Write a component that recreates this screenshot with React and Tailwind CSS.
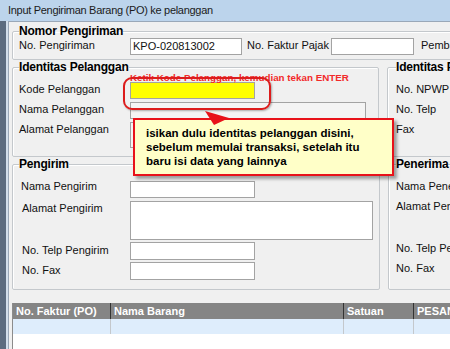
const Field = ({w, h = 17, bg = "bg-white", children}) => (
    <div className={`${w} shrink-0 border border-[#a3a3a3] ${bg} flex items-center pl-[2px]`} style={{height: h}}>
        {children}
    </div>
);

const Label = ({w = "w-[111px]", className = "", children}) => (
    <div className={`${w} shrink-0 h-[17px] flex items-center pb-[2px] whitespace-nowrap ${className}`}>{children}</div>
);

const Group = ({title, className = "", children}) => (
    <fieldset className={`border border-[#c4c8cc] rounded-[2px] shadow-[inset_1px_1px_0_#fff] px-[6px] ${className}`}>
        <legend className="text-[12px] leading-[12px] font-bold text-black tracking-[-0.2px]">{title}</legend>
        {children}
    </fieldset>
);

const App = () => {
    return (
        <div className="relative w-[450px] h-[349px] overflow-hidden bg-[#f0f0f0] font-['Liberation_Sans',Arial,sans-serif] text-[11px] text-[#111]">
            {/* title bar */}
            <div className="h-[21px] bg-[#bcd4ec] flex items-center pl-[8px] text-[11px] tracking-[-0.3px] text-[#1b1b1b] whitespace-nowrap">
                Input Pengiriman Barang (PO) ke pelanggan
            </div>
            <div className="flex h-[328px]">
                <div className="w-[6px] shrink-0 bg-[#5c6c80]"/>
                <div className="w-[2px] shrink-0 bg-[#d3dfec]"/>
                <div className="w-[640px] shrink-0 border-t border-l border-[#9aa8b8] pl-[3px] pt-[3px] flex flex-col">
                    {/* Nomor Pengiriman */}
                    <Group title="Nomor Pengiriman" className="w-[620px] pb-[4px]">
                        <div className="mt-[1px] flex items-center h-[17px]">
                            <Label>No. Pengiriman</Label>
                            <Field w="w-[112px]">KPO-020813002</Field>
                            <Label w="w-[84px]" className="ml-[5px]">No. Faktur Pajak</Label>
                            <Field w="w-[83px]"/>
                            <Label w="w-[80px]" className="ml-[7px]">Pembayaran</Label>
                        </div>
                    </Group>

                    {/* Identitas */}
                    <div className="mt-[1px] flex gap-[8px]">
                        <Group title="Identitas Pelanggan" className="w-[367px] pb-[8px]">
                            <div className="mt-[9px] flex flex-col gap-[3px]">
                                <div className="flex items-start">
                                    <Label>Kode Pelanggan</Label>
                                    <Field w="w-[125px]" bg="bg-[#ffff00]"/>
                                </div>
                                <div className="flex items-start">
                                    <Label>Nama Pelanggan</Label>
                                    <Field w="w-[236px]" bg="bg-[#f4f4f4]"/>
                                </div>
                                <div className="flex items-start">
                                    <Label>Alamat Pelanggan</Label>
                                    <Field w="w-[236px]" h={26} bg="bg-[#f4f4f4]"/>
                                </div>
                            </div>
                        </Group>
                        <Group title="Identitas Pelanggan" className="w-[240px] pb-[8px] px-[8px]">
                            <div className="mt-[9px] flex flex-col gap-[3px]">
                                <Label>No. NPWP</Label>
                                <Label>No. Telp</Label>
                                <div className="h-[26px]"><Label>Fax</Label></div>
                            </div>
                        </Group>
                    </div>

                    {/* Pengirim / Penerima */}
                    <div className="mt-[1px] flex gap-[8px]">
                        <Group title="Pengirim" className="w-[367px] pb-[9px]">
                            <div className="mt-[11px] flex flex-col">
                                <div className="flex items-start">
                                    <Label className="pl-[2px] -mt-[2px]">Nama Pengirim</Label>
                                    <Field w="w-[125px]"/>
                                </div>
                                <div className="mt-[3px] flex items-start">
                                    <Label className="pl-[3px]">Alamat Pengirim</Label>
                                    <Field w="w-[243px]" h={39}/>
                                </div>
                                <div className="mt-[2px] flex items-center">
                                    <Label className="pl-[3px]">No. Telp Pengirim</Label>
                                    <Field w="w-[125px]" h={18}/>
                                </div>
                                <div className="mt-[2px] flex items-center">
                                    <Label className="pl-[3px]">No. Fax</Label>
                                    <Field w="w-[125px]" h={18}/>
                                </div>
                            </div>
                        </Group>
                        <Group title="Penerima" className="w-[240px] pb-[9px] px-[7px]">
                            <div className="mt-[11px] flex flex-col">
                                <Label className="-mt-[2px]">Nama Penerima</Label>
                                <div className="mt-[3px] h-[39px]"><Label>Alamat Penerima</Label></div>
                                <div className="mt-[2px] h-[18px] flex items-center"><Label>No. Telp Penerima</Label></div>
                                <div className="mt-[2px] h-[18px] flex items-center"><Label>No. Fax</Label></div>
                            </div>
                        </Group>
                    </div>

                    {/* table */}
                    <div className="mt-[13px] flex-1 w-[620px] border-l border-[#8c8c8c] bg-white">
                        <div className="flex h-[16px] bg-[#858585] text-white font-bold">
                            <div className="w-[98px] shrink-0 border-r border-[#333] pl-[3px] flex items-center">No. Faktur (PO)</div>
                            <div className="w-[233px] shrink-0 border-r border-[#333] pl-[3px] flex items-center">Nama Barang</div>
                            <div className="w-[70px] shrink-0 border-r border-[#333] pl-[3px] flex items-center">Satuan</div>
                            <div className="w-[100px] shrink-0 pl-[3px] flex items-center">PESANAN</div>
                        </div>
                        <div className="flex h-[15px] bg-[#deedfc]">
                            <div className="w-[98px] shrink-0 border-r border-[#c4c8cc]"/>
                            <div className="w-[233px] shrink-0 border-r border-[#c4c8cc]"/>
                            <div className="w-[70px] shrink-0 border-r border-[#c4c8cc]"/>
                            <div className="flex-1"/>
                        </div>
                    </div>
                </div>
            </div>

            {/* annotations */}
            <div className="absolute left-[130px] top-[72px] text-[9.8px] leading-[12px] font-bold text-[#f22a2a] whitespace-nowrap">
                Ketik Kode Pelanggan, kemudian tekan ENTER
            </div>
            <div className="absolute left-[123px] top-[77px] w-[148px] h-[33px] border-2 border-[#dc1c1c] rounded-[9px] shadow-[1px_1px_2px_rgba(0,0,0,0.3)]"/>
            <div className="absolute left-[133px] top-[118px] w-[261px] h-[58px] border-2 border-[#e8121a] bg-[#ffffc8] shadow-[3px_3px_3px_rgba(0,0,0,0.35)] pl-[11px] pt-[6px] text-[11.5px] leading-[14px] font-bold text-black whitespace-nowrap">
                <div>isikan dulu identitas pelanggan disini,</div>
                <div>sebelum memulai transaksi, setelah itu</div>
                <div>baru isi data yang lainnya</div>
            </div>
            <svg className="absolute left-[200px] top-[106px]" width="36" height="22" viewBox="0 0 36 22">
                <polygon points="5,5 29,12 14,19" fill="#e8121a"/>
            </svg>
        </div>
    );
};

export default App;
